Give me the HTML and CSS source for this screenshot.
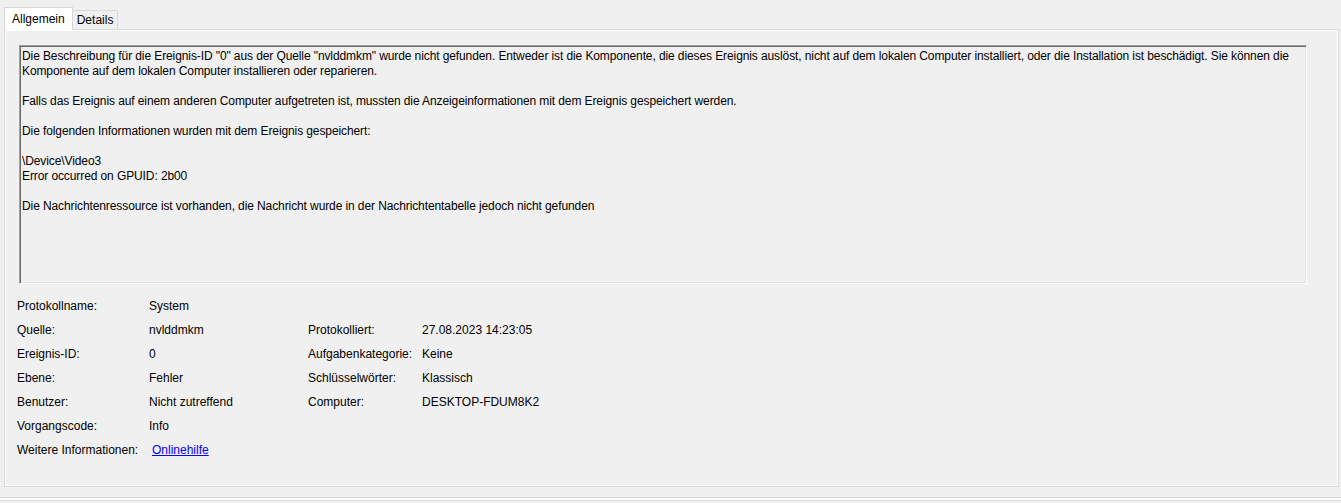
FILE: index.html
```html
<!DOCTYPE html>
<html lang="de">
<head>
<meta charset="utf-8">
<title>Ereignis</title>
<link rel="stylesheet" href="styles.css">
</head>
<body>
<div class="tabs">
  <div class="tab active">Allgemein</div>
  <div class="tab">Details</div>
</div>
<div class="panel">
  <div class="desc">
    <p>Die Beschreibung für die Ereignis-ID "0" aus der Quelle "nvlddmkm" wurde nicht gefunden. Entweder ist die Komponente, die dieses Ereignis auslöst, nicht auf dem lokalen Computer installiert, oder die Installation ist beschädigt. Sie können die Komponente auf dem lokalen Computer installieren oder reparieren.</p>
    <p>Falls das Ereignis auf einem anderen Computer aufgetreten ist, mussten die Anzeigeinformationen mit dem Ereignis gespeichert werden.</p>
    <p>Die folgenden Informationen wurden mit dem Ereignis gespeichert:</p>
    <p>\Device\Video3<br>Error occurred on GPUID: 2b00</p>
    <p>Die Nachrichtenressource ist vorhanden, die Nachricht wurde in der Nachrichtentabelle jedoch nicht gefunden</p>
  </div>
  <div class="info">
    <span>Protokollname:</span><span>System</span><span></span><span></span>
    <span>Quelle:</span><span>nvlddmkm</span><span>Protokolliert:</span><span>27.08.2023 14:23:05</span>
    <span>Ereignis-ID:</span><span>0</span><span>Aufgabenkategorie:</span><span>Keine</span>
    <span>Ebene:</span><span>Fehler</span><span>Schlüsselwörter:</span><span>Klassisch</span>
    <span>Benutzer:</span><span>Nicht zutreffend</span><span>Computer:</span><span>DESKTOP-FDUM8K2</span>
    <span>Vorgangscode:</span><span>Info</span><span></span><span></span>
    <span>Weitere Informationen:</span><span><a class="link" href="#">Onlinehilfe</a></span><span></span><span></span>
  </div>
</div>
<div class="bottom"></div>
</body>
</html>
```
FILE: styles.css
```css
html, body {
  margin: 0;
  background: #f0f0f0;
  font-family: "Liberation Sans", Arial, sans-serif;
  font-size: 12px;
  color: #000;
}
.tabs {
  display: flex;
  align-items: flex-end;
  padding-left: 4px;
  padding-top: 7px;
  height: 22px;
}
.tab {
  height: 18px;
  line-height: 18px;
  padding: 0 4px;
  border: 1px solid #d9d9d9;
  border-bottom: none;
  border-left: none;
  background: #f0f0f0;
}
.tab.active {
  height: 22px;
  line-height: 22px;
  padding: 0 7px;
  border-left: 1px solid #d9d9d9;
  background: #fff;
  position: relative;
  top: 1px;
}
.panel {
  margin: 0 2px 0 4px;
  border: 1px solid #d9d9d9;
  box-shadow: inset 0 0 0 1px #fff;
  padding: 15px 0 0 14px;
  box-sizing: border-box;
  height: 458px;
}
.desc {
  width: 1288px;
  height: 239px;
  box-sizing: border-box;
  border-top: 1px solid #a0a0a0;
  border-left: 1px solid #a0a0a0;
  border-right: 1px solid #fff;
  border-bottom: 1px solid #fff;
  box-shadow: inset 1px 1px 0 #696969, inset -1px -1px 0 #e3e3e3;
  padding: 3px 4px 0 2px;
  line-height: 15px;
  letter-spacing: -0.1px;
  background: #f0f0f0;
}
.desc p {
  margin: 0 0 15px 0;
}
.info {
  display: grid;
  grid-template-columns: 132px 159px 114px 1fr;
  grid-auto-rows: 24px;
  align-items: center;
  margin-top: 10px;
  margin-left: -2px;
}
.link {
  color: #0000ff;
  text-decoration: underline;
  margin-left: 3px;
}
.bottom {
  margin-top: 10px;
  height: 2px;
  border-top: 1px solid #d9d9d9;
  border-bottom: 1px solid #d9d9d9;
  background: #fff;
}
```
